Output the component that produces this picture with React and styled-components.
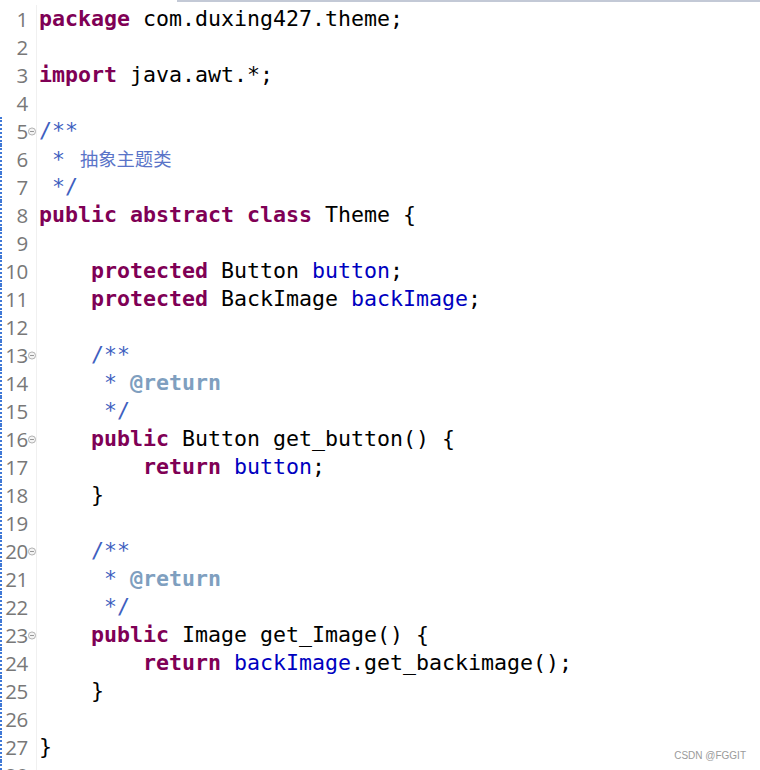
import React from "react";
import styled, { createGlobalStyle } from "styled-components";

const Global = createGlobalStyle`
  html, body { margin: 0; padding: 0; background: #ffffff; }
  body { width: 760px; height: 770px; overflow: hidden; }
`;

const Page = styled.div`
  position: relative;
  width: 760px;
  height: 770px;
  overflow: hidden;
  background: #ffffff;
`;

const TopRule = styled.div`
  height: 2px;
  margin-left: 177px;
  background: #c3c9d6;
`;

const Editor = styled.div`
  display: flex;
  flex-direction: column;
  padding-top: 3px;
`;

const Line = styled.div`
  display: flex;
  height: 28px;
  align-items: center;
`;

const Marker = styled.div`
  width: 2px;
  height: 28px;
  box-sizing: border-box;
  border-left: ${(p) => (p.$changed ? "2px dotted #3f78d6" : "none")};
`;

const Num = styled.div`
  width: 26px;
  text-align: right;
  font-family: "Open Sans", "Noto Sans", sans-serif;
  font-size: 20.5px;
  color: #787878;
  line-height: 28px;
  letter-spacing: -0.3px;
`;

const Fold = styled.div`
  width: 8px;
  height: 28px;
  display: flex;
  align-items: center;
  justify-content: center;
  border-right: 1px solid #f0f0f0;
`;

const Code = styled.div`
  padding-left: 2px;
  font-family: "DejaVu Sans Mono", "Liberation Mono", monospace;
  font-size: 21.6px;
  line-height: 28px;
  white-space: pre;
  color: #000000;
`;

const colors = {
  kw: "#7f0055",
  field: "#0000c0",
  doc: "#3f5fbf",
  tag: "#7f9fbf",
  plain: "#000000",
  cjk: "#5a74c8",
};

const Token = styled.span`
  color: ${(p) => colors[p.$kind]};
  font-weight: ${(p) => (p.$kind === "kw" || p.$kind === "tag" ? 700 : 400)};
  ${(p) =>
    p.$kind === "cjk"
      ? `font-family: "Noto Sans CJK SC", sans-serif; font-size: 18.3px; margin-left: 2px; vertical-align: 1px;`
      : ""}
`;

const Watermark = styled.div`
  position: absolute;
  right: 14px;
  top: 750px;
  font-family: "Liberation Sans", Arial, sans-serif;
  font-size: 10px;
  color: #9a9a9a;
`;

const FoldIcon = () => (
  <svg width="9" height="9" viewBox="0 0 9 9">
    <circle cx="4.5" cy="4.5" r="4" fill="#f4f4f4" stroke="#a8a8a8" strokeWidth="1" />
    <line x1="2.3" y1="4.5" x2="6.7" y2="4.5" stroke="#8a8a8a" strokeWidth="1" />
  </svg>
);

const I = "    ";
const lines = [
  [["kw", "package"], ["plain", " com.duxing427.theme;"]],
  [],
  [["kw", "import"], ["plain", " java.awt.*;"]],
  [],
  [["doc", "/**"]],
  [["doc", " * "], ["cjk", "抽象主题类"]],
  [["doc", " */"]],
  [["kw", "public"], ["plain", " "], ["kw", "abstract"], ["plain", " "], ["kw", "class"], ["plain", " Theme {"]],
  [],
  [["plain", I], ["kw", "protected"], ["plain", " Button "], ["field", "button"], ["plain", ";"]],
  [["plain", I], ["kw", "protected"], ["plain", " BackImage "], ["field", "backImage"], ["plain", ";"]],
  [],
  [["plain", I], ["doc", "/**"]],
  [["plain", I], ["doc", " * "], ["tag", "@return"]],
  [["plain", I], ["doc", " */"]],
  [["plain", I], ["kw", "public"], ["plain", " Button get_button() {"]],
  [["plain", I + I], ["kw", "return"], ["plain", " "], ["field", "button"], ["plain", ";"]],
  [["plain", I + "}"]],
  [],
  [["plain", I], ["doc", "/**"]],
  [["plain", I], ["doc", " * "], ["tag", "@return"]],
  [["plain", I], ["doc", " */"]],
  [["plain", I], ["kw", "public"], ["plain", " Image get_Image() {"]],
  [["plain", I + I], ["kw", "return"], ["plain", " "], ["field", "backImage"], ["plain", ".get_backimage();"]],
  [["plain", I + "}"]],
  [],
  [["plain", "}"]],
  [],
];

const folds = new Set([5, 13, 16, 20, 23]);

export default function App() {
  return (
    <Page>
      <Global />
      <TopRule />
      <Editor>
        {lines.map((toks, i) => {
          const n = i + 1;
          return (
            <Line key={n}>
              <Marker $changed={n >= 5} />
              <Num>{n}</Num>
              <Fold>{folds.has(n) ? <FoldIcon /> : null}</Fold>
              <Code>
                {toks.length === 0
                  ? " "
                  : toks.map(([k, t], j) => (
                      <Token key={j} $kind={k}>
                        {t}
                      </Token>
                    ))}
              </Code>
            </Line>
          );
        })}
      </Editor>
      <Watermark>CSDN @FGGIT</Watermark>
    </Page>
  );
}
